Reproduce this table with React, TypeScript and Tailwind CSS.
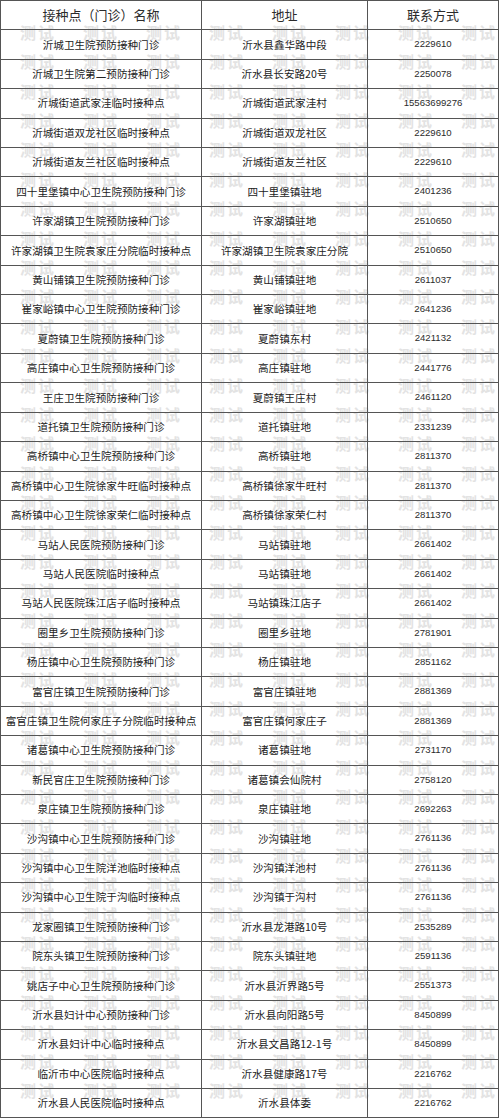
const rows: [string, string, string][] = [
  ['沂城卫生院预防接种门诊', '沂水县鑫华路中段', '2229610'],
  ['沂城卫生院第二预防接种门诊', '沂水县长安路20号', '2250078'],
  ['沂城街道武家洼临时接种点', '沂城街道武家洼村', '15563699276'],
  ['沂城街道双龙社区临时接种点', '沂城街道双龙社区', '2229610'],
  ['沂城街道友兰社区临时接种点', '沂城街道友兰社区', '2229610'],
  ['四十里堡镇中心卫生院预防接种门诊', '四十里堡镇驻地', '2401236'],
  ['许家湖镇卫生院预防接种门诊', '许家湖镇驻地', '2510650'],
  ['许家湖镇卫生院袁家庄分院临时接种点', '许家湖镇卫生院袁家庄分院', '2510650'],
  ['黄山铺镇卫生院预防接种门诊', '黄山铺镇驻地', '2611037'],
  ['崔家峪镇中心卫生院预防接种门诊', '崔家峪镇驻地', '2641236'],
  ['夏蔚镇卫生院预防接种门诊', '夏蔚镇东村', '2421132'],
  ['高庄镇中心卫生院预防接种门诊', '高庄镇驻地', '2441776'],
  ['王庄卫生院预防接种门诊', '夏蔚镇王庄村', '2461120'],
  ['道托镇卫生院预防接种门诊', '道托镇驻地', '2331239'],
  ['高桥镇中心卫生院预防接种门诊', '高桥镇驻地', '2811370'],
  ['高桥镇中心卫生院徐家牛旺临时接种点', '高桥镇徐家牛旺村', '2811370'],
  ['高桥镇中心卫生院徐家荣仁临时接种点', '高桥镇徐家荣仁村', '2811370'],
  ['马站人民医院预防接种门诊', '马站镇驻地', '2661402'],
  ['马站人民医院临时接种点', '马站镇驻地', '2661402'],
  ['马站人民医院珠江店子临时接种点', '马站镇珠江店子', '2661402'],
  ['圈里乡卫生院预防接种门诊', '圈里乡驻地', '2781901'],
  ['杨庄镇中心卫生院预防接种门诊', '杨庄镇驻地', '2851162'],
  ['富官庄镇卫生院预防接种门诊', '富官庄镇驻地', '2881369'],
  ['富官庄镇卫生院何家庄子分院临时接种点', '富官庄镇何家庄子', '2881369'],
  ['诸葛镇中心卫生院预防接种门诊', '诸葛镇驻地', '2731170'],
  ['新民官庄卫生院预防接种门诊', '诸葛镇会仙院村', '2758120'],
  ['泉庄镇卫生院预防接种门诊', '泉庄镇驻地', '2692263'],
  ['沙沟镇中心卫生院预防接种门诊', '沙沟镇驻地', '2761136'],
  ['沙沟镇中心卫生院洋池临时接种点', '沙沟镇洋池村', '2761136'],
  ['沙沟镇中心卫生院于沟临时接种点', '沙沟镇于沟村', '2761136'],
  ['龙家圈镇卫生院预防接种门诊', '沂水县龙港路10号', '2535289'],
  ['院东头镇卫生院预防接种门诊', '院东头镇驻地', '2591136'],
  ['姚店子中心卫生院预防接种门诊', '沂水县沂界路5号', '2551373'],
  ['沂水县妇计中心预防接种门诊', '沂水县向阳路5号', '8450899'],
  ['沂水县妇计中心临时接种点', '沂水县文昌路12-1号', '8450899'],
  ['临沂市中心医院临时接种点', '沂水县健康路17号', '2216762'],
  ['沂水县人民医院临时接种点', '沂水县体委', '2216762'],
];

const cjk = "font-['SimSun','Noto_Sans_CJK_SC',sans-serif]";

// 水印：每行八个“测试”，压在行线上
function Watermark() {
  return (
    <div className="pointer-events-none absolute left-0 top-[17px] w-[499px]">
      {rows.map((_, i) => (
        <div key={i} className="flex h-[29.42px] w-[499px] flex-row items-center gap-[26px] pl-[20px]">
          {Array.from({ length: 8 }).map((__, j) => (
            <span
              key={j}
              className={`${cjk} inline-block w-[37px] shrink-0 whitespace-nowrap text-[16px] font-bold leading-none tracking-[2px] text-[#e3e3e3]`}
            >
              测试
            </span>
          ))}
        </div>
      ))}
    </div>
  );
}

export default function App() {
  const cell = 'flex h-[29.42px] items-center justify-center border-b border-r border-[#555] whitespace-nowrap';

  return (
    <div className="relative h-[1119px] w-[499px] overflow-hidden bg-white">
      <Watermark />
      <div className="relative grid w-[499px] grid-cols-[201px_166px_131px] border-l border-t border-[#555]">
        {/* 表头 */}
        <div className={`${cell} ${cjk} text-[13px] text-[#2b2b2b]`}>接种点（门诊）名称</div>
        <div className={`${cell} ${cjk} text-[13px] text-[#2b2b2b]`}>地址</div>
        <div className={`${cell} ${cjk} text-[13px] text-[#2b2b2b]`}>联系方式</div>

        {rows.map(([name, addr, phone], i) => (
          <div key={i} className="contents">
            <div className={`${cell} ${cjk} text-[10.6px] text-[#222]`}>{name}</div>
            <div className={`${cell} ${cjk} text-[10.6px] text-[#222]`}>{addr}</div>
            <div className={`${cell} font-['Liberation_Sans',Arial,sans-serif] text-[9.6px] text-[#2b2b2b]`}>{phone}</div>
          </div>
        ))}
      </div>
    </div>
  );
}
